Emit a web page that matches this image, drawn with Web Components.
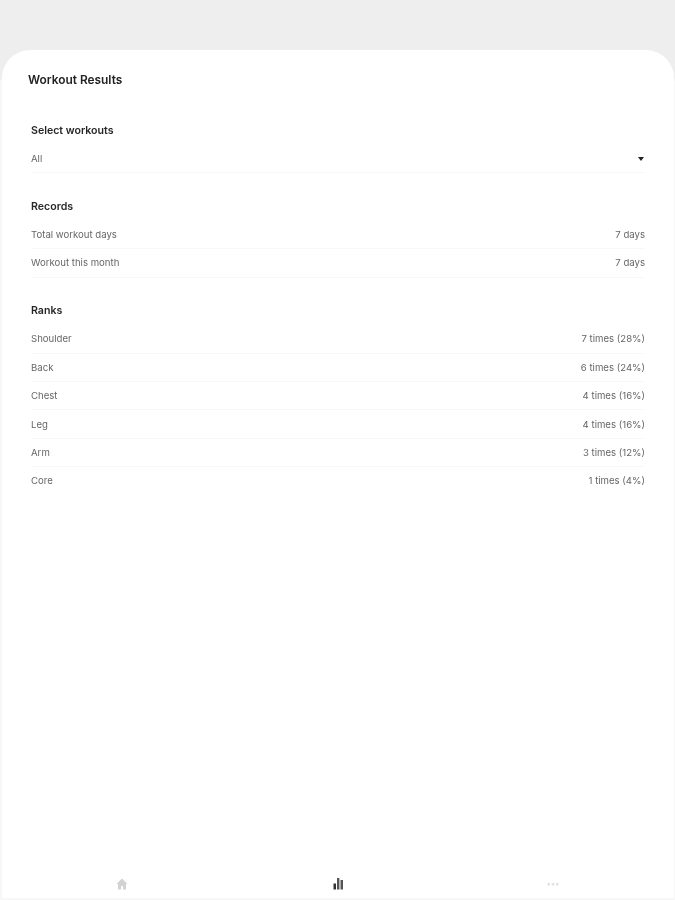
<!DOCTYPE html>
<html><head><meta charset="utf-8">
<style>
html,body{margin:0;padding:0;height:100%;font-family:Inter,"Liberation Sans",sans-serif;}
html{background:#f7f7f7}
body{overflow:hidden;background:linear-gradient(#eeeeee 0,#eeeeee 78px,#f7f7f7 82px)}
</style></head>
<body>
<results-sheet>
  <sheet-title slot="title">Workout Results</sheet-title>
  <result-section heading="Select workouts">
    <result-row label="All" arrow></result-row>
  </result-section>
  <result-section heading="Records">
    <result-row label="Total workout days" value="7 days"></result-row>
    <result-row label="Workout this month" value="7 days"></result-row>
  </result-section>
  <result-section heading="Ranks">
    <result-row label="Shoulder" value="7 times (28%)"></result-row>
    <result-row label="Back" value="6 times (24%)"></result-row>
    <result-row label="Chest" value="4 times (16%)"></result-row>
    <result-row label="Leg" value="4 times (16%)"></result-row>
    <result-row label="Arm" value="3 times (12%)"></result-row>
    <result-row label="Core" value="1 times (4%)" last></result-row>
  </result-section>
  <tab-bar slot="nav"></tab-bar>
</results-sheet>
<script>
class ResultsSheet extends HTMLElement{constructor(){super();this.attachShadow({mode:'open'}).innerHTML=`
<style>
:host{display:flex;flex-direction:column;box-sizing:border-box;height:848px;margin:50px 1px 0 2px;background:#fff;border-radius:28px 28px 0 0;overflow:hidden;filter:blur(.35px)}
.main{flex:1;display:flex;flex-direction:column;padding:0 29px 0 29px}
</style>
<slot name="title"></slot><div class="main"><slot></slot></div><slot name="nav"></slot>`}}
class SheetTitle extends HTMLElement{constructor(){super();this.attachShadow({mode:'open'}).innerHTML=`
<style>:host{display:block;padding:22px 0 0 26px;height:51px;box-sizing:content-box;font-size:11.9px;line-height:16px;font-weight:600;color:#222}</style><slot></slot>`}}
class ResultSection extends HTMLElement{constructor(){super();this.attachShadow({mode:'open'}).innerHTML=`
<style>:host{display:block;margin-bottom:25.5px;}
h2{margin:0;font-size:10.6px;line-height:16px;font-weight:600;color:#262626;padding-bottom:6px}
</style><h2></h2><slot></slot>`}
connectedCallback(){this.shadowRoot.querySelector('h2').textContent=this.getAttribute('heading')}}
class ResultRow extends HTMLElement{constructor(){super();this.attachShadow({mode:'open'}).innerHTML=`
<style>:host{display:flex;justify-content:space-between;align-items:center;height:28.4px;box-sizing:border-box;border-bottom:1px solid #f8f8f8;font-size:9.6px;color:#666}
:host([last]){border-bottom-color:transparent}
.a{width:0;height:0;border-left:3px solid transparent;border-right:3px solid transparent;border-top:4px solid #222;margin-right:1px}
</style><span class="l"></span><span class="v"></span>`}
connectedCallback(){const s=this.shadowRoot;s.querySelector('.l').textContent=this.getAttribute('label');
const v=s.querySelector('.v');if(this.hasAttribute('arrow'))v.className='a';else v.textContent=this.getAttribute('value')}}
class TabBar extends HTMLElement{constructor(){super();this.attachShadow({mode:'open'}).innerHTML=`
<style>:host{display:grid;grid-template-columns:repeat(3,1fr);padding:0 13.5px;height:32px;align-items:start}
div{display:flex;justify-content:center;height:32px;align-items:flex-start}
svg{width:14px;height:14px;display:block;margin-top:11px;margin-left:-2px}
.c svg{margin-left:1px}
.d svg{margin-left:-1px}</style>
<div><svg viewBox="0 0 14 14"><path fill="#d2d2d2" d="M7 1.500 1.500 7H3v5.500h3V9h2v3.500h3V7h1.500z"/></svg></div>
<div class="c"><svg viewBox="0 0 14 14"><path fill="#333" d="M1.500 6.500h2.500v6H1.500z"/><path fill="#555" d="M5 1h2.400v11.500H5zM8.500 3h2.500v9.500H8.500z"/></svg></div>
<div class="d"><svg viewBox="0 0 14 14"><g fill="#e2e2e2"><rect x="1.500" y="6" width="2.500" height="2.500"/><rect x="5.800" y="6" width="2.500" height="2.500"/><rect x="10" y="6" width="2.500" height="2.500"/></g></svg></div>`}}
customElements.define('results-sheet',ResultsSheet);
customElements.define('sheet-title',SheetTitle);
customElements.define('result-section',ResultSection);
customElements.define('result-row',ResultRow);
customElements.define('tab-bar',TabBar);
</script>
</body></html>
